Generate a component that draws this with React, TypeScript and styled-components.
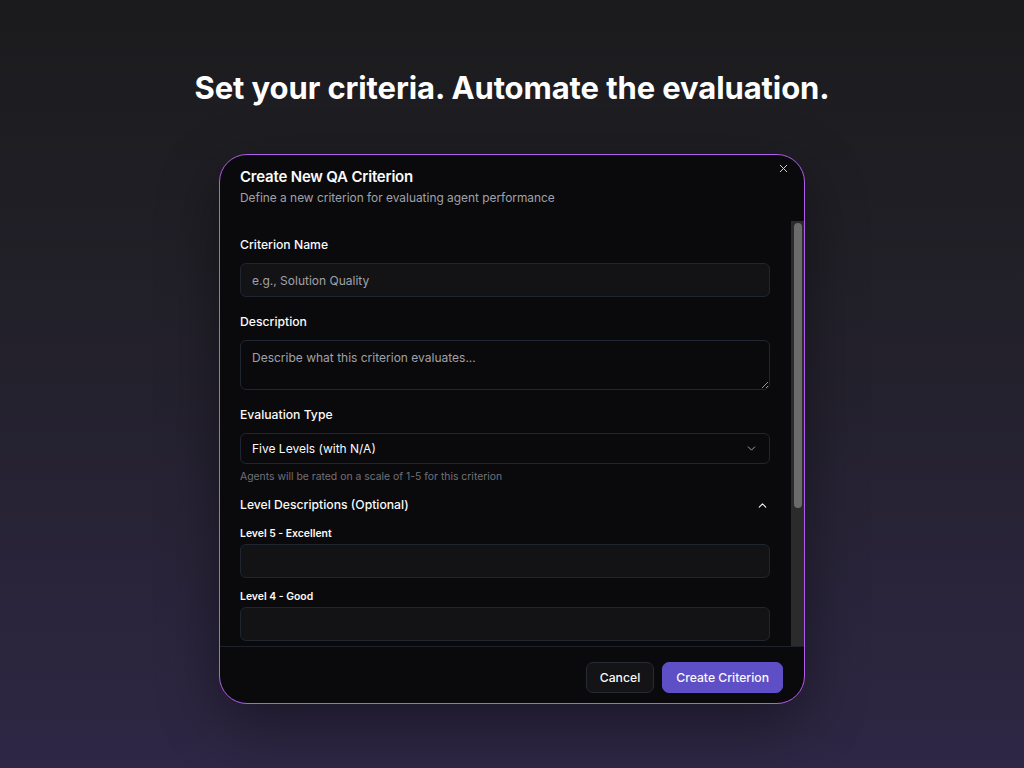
import React from "react";
import styled, { createGlobalStyle } from "styled-components";
import { X, ChevronDown, ChevronUp } from "lucide-react";

const GlobalStyle = createGlobalStyle`
  html, body {
    margin: 0;
    padding: 0;
    height: 100%;
  }
  body {
    font-family: Inter, "Noto Sans", sans-serif;
    background: linear-gradient(180deg, #1b1b1d 0%, #222029 40%, #2e2745 100%);
    color: #fafafa;
  }
  #root {
    min-height: 100vh;
  }
`;

const Page = styled.div`
  min-height: 768px;
  display: flex;
  flex-direction: column;
  align-items: center;
  padding-top: 70px;
  box-sizing: border-box;
`;

const Headline = styled.h1`
  margin: 0 0 48px;
  font-size: 31px;
  line-height: 36px;
  font-weight: 700;
  letter-spacing: -0.1px;
  color: #ffffff;
`;

const Modal = styled.div`
  position: relative;
  width: 586px;
  height: 550px;
  box-sizing: border-box;
  border: 1px solid #b35cf0;
  border-radius: 28px;
  background: #0a0a0c;
  display: flex;
  flex-direction: column;
  overflow: hidden;
  box-shadow: 0 20px 60px rgba(0, 0, 0, 0.4);
`;

const Header = styled.div`
  padding: 12px 21px 15px 20px;
  flex-shrink: 0;
`;

const Title = styled.h2`
  margin: 0 0 3px;
  font-size: 15px;
  line-height: 20px;
  font-weight: 600;
  letter-spacing: -0.2px;
  color: #fafafa;
`;

const Subtitle = styled.p`
  margin: 0;
  font-size: 11.9px;
  line-height: 16px;
  color: #a1a1aa;
`;

const CloseButton = styled.button`
  position: absolute;
  top: 7px;
  right: 14px;
  background: none;
  border: none;
  padding: 0;
  color: #d4d4d8;
  display: flex;
  cursor: pointer;
`;

const Body = styled.div`
  flex: 1;
  min-height: 0;
  display: flex;
`;

const ScrollContent = styled.div`
  flex: 1;
  overflow: hidden;
  padding: 16px 21px 20px 20px;
`;

const ScrollTrack = styled.div`
  width: 13px;
  flex-shrink: 0;
  box-sizing: border-box;
  background: #2b2b2b;
  padding: 2px 2px 0 3px;
`;

const ScrollThumb = styled.div`
  height: 285px;
  background: #6b6b6b;
  border-radius: 4px;
`;

const Field = styled.div<{ $gap?: number }>`
  display: flex;
  flex-direction: column;
  margin-bottom: ${(p) => p.$gap ?? 17}px;
`;

const Label = styled.label<{ $small?: boolean }>`
  font-size: ${(p) => (p.$small ? "10.4px" : "12.2px")};
  line-height: ${(p) => (p.$small ? "14px" : "16px")};
  font-weight: ${(p) => (p.$small ? 600 : 500)};
  color: #fafafa;
  margin-bottom: ${(p) => (p.$small ? "3px" : "10px")};
`;

const Input = styled.input`
  height: 34px;
  box-sizing: border-box;
  background: #131315;
  border: 1px solid #1f2531;
  border-radius: 6px;
  padding: 0 11px;
  font-family: inherit;
  font-size: 12px;
  color: #fafafa;
  outline: none;

  &::placeholder {
    color: #a1a1aa;
  }
`;

const TextArea = styled.textarea`
  height: 50px;
  box-sizing: border-box;
  background: #0a0a0c;
  border: 1px solid #1f2531;
  border-radius: 6px;
  padding: 9px 11px;
  font-family: inherit;
  font-size: 12px;
  line-height: 16px;
  color: #fafafa;
  outline: none;
  resize: vertical;

  &::placeholder {
    color: #a1a1aa;
  }
`;

const Select = styled.div`
  height: 31px;
  box-sizing: border-box;
  border: 1px solid #1f2531;
  border-radius: 6px;
  padding: 0 11px;
  display: flex;
  align-items: center;
  justify-content: space-between;
  font-size: 12px;
  color: #fafafa;
  margin-bottom: 6px;

  svg {
    color: #9ca3af;
  }
`;

const Helper = styled.p`
  margin: 0;
  font-size: 10.4px;
  line-height: 14px;
  color: #71717a;
`;

const SectionHeader = styled.div`
  display: flex;
  align-items: center;
  justify-content: space-between;
  font-size: 12.2px;
  line-height: 16px;
  font-weight: 500;
  color: #fafafa;
  margin: 13px 0 14px;

  svg {
    color: #fafafa;
    margin-right: 1px;
  }
`;

const Footer = styled.div`
  height: 57px;
  box-sizing: border-box;
  flex-shrink: 0;
  border-top: 1px solid #1c212b;
  display: flex;
  align-items: center;
  justify-content: flex-end;
  gap: 8px;
  padding: 4px 21px 0;
`;

const Button = styled.button<{ $primary?: boolean }>`
  height: 31px;
  padding: 0 13px;
  border-radius: 7px;
  font-family: inherit;
  font-size: 12.2px;
  font-weight: 500;
  cursor: pointer;
  color: #fafafa;
  background: ${(p) => (p.$primary ? "#5f4fc7" : "#141416")};
  border: 1px solid ${(p) => (p.$primary ? "#5f4fc7" : "#262a33")};
`;

const levels = [
  "Level 5 - Excellent",
  "Level 4 - Good",
  "Level 3 - Average",
  "Level 2 - Below Average",
  "Level 1 - Poor",
];

export default function App() {
  return (
    <>
      <GlobalStyle />
      <Page>
        <Headline>Set your criteria. Automate the evaluation.</Headline>
        <Modal>
          <CloseButton aria-label="Close">
            <X size={13} strokeWidth={1.8} />
          </CloseButton>
          <Header>
            <Title>Create New QA Criterion</Title>
            <Subtitle>Define a new criterion for evaluating agent performance</Subtitle>
          </Header>
          <Body>
            <ScrollContent>
              <Field>
                <Label>Criterion Name</Label>
                <Input placeholder="e.g., Solution Quality" />
              </Field>
              <Field>
                <Label>Description</Label>
                <TextArea placeholder="Describe what this criterion evaluates..." />
              </Field>
              <Field $gap={0}>
                <Label>Evaluation Type</Label>
                <Select>
                  <span>Five Levels (with N/A)</span>
                  <ChevronDown size={13} strokeWidth={1.8} />
                </Select>
                <Helper>Agents will be rated on a scale of 1-5 for this criterion</Helper>
              </Field>
              <SectionHeader>
                <span>Level Descriptions (Optional)</span>
                <ChevronUp size={13} strokeWidth={2} />
              </SectionHeader>
              {levels.map((l) => (
                <Field key={l} $gap={12}>
                  <Label $small>{l}</Label>
                  <Input />
                </Field>
              ))}
            </ScrollContent>
            <ScrollTrack>
              <ScrollThumb />
            </ScrollTrack>
          </Body>
          <Footer>
            <Button>Cancel</Button>
            <Button $primary>Create Criterion</Button>
          </Footer>
        </Modal>
      </Page>
    </>
  );
}
